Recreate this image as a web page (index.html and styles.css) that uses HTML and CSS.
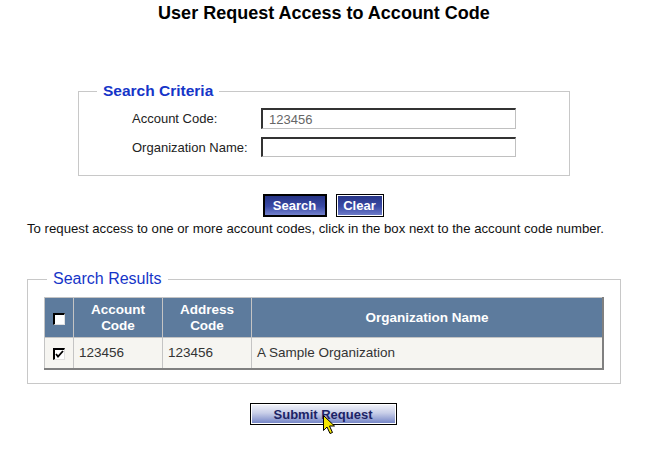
FILE: index.html
```html
<!DOCTYPE html>
<html lang="en">
<head>
  <meta charset="UTF-8">
  <title>User Request Access to Account Code</title>
  <link rel="stylesheet" href="styles.css">
</head>
<body>
  <div class="page">
    <h1 class="title">User Request Access to Account Code</h1>

    <fieldset class="criteria">
      <legend>Search Criteria</legend>
      <div class="form-grid">
        <label for="acct">Account Code:</label>
        <input type="text" id="acct" value="123456">
        <label for="org">Organization Name:</label>
        <input type="text" id="org">
      </div>
    </fieldset>

    <div class="actions">
      <button type="button" class="btn btn-search">Search</button>
      <button type="button" class="btn btn-clear">Clear</button>
    </div>

    <p class="hint">To request access to one or more account codes, click in the box next to the account code number.</p>

    <fieldset class="results">
      <legend>Search Results</legend>
      <div class="results-body">
        <table>
          <thead>
            <tr>
              <th class="col-check"><span class="check"></span></th>
              <th class="col-acct">Account<br>Code</th>
              <th class="col-addr">Address<br>Code</th>
              <th>Organization Name</th>
            </tr>
          </thead>
          <tbody>
            <tr>
              <td class="col-check">
                <span class="check">
                  <svg width="9" height="9" viewBox="0 0 9 9"><path d="M1 4 L3 6.5 L8 1" fill="none" stroke="#000" stroke-width="1.8"/></svg>
                </span>
              </td>
              <td>123456</td>
              <td>123456</td>
              <td>A Sample Organization</td>
            </tr>
          </tbody>
        </table>
      </div>
    </fieldset>

    <div class="submit-row">
      <button type="button" class="btn-submit">Submit Request</button>
      <svg class="cursor" width="15" height="22" viewBox="0 0 15 22">
        <path d="M1.5 1.5 L1.5 16.5 L5 13 L8 19.5 L10.5 18.5 L7.5 12 L12.5 12 Z" fill="#f5e600" stroke="#000" stroke-width="1"/>
      </svg>
    </div>
  </div>
</body>
</html>
```

FILE: styles.css
```css
* {
  box-sizing: border-box;
}
body {
  margin: 0;
  background: #fff;
  font-family: "Liberation Sans", Arial, sans-serif;
  font-size: 13px;
  color: #111;
}
.page {
  width: 648px;
  padding-top: 2px;
}
.title {
  margin: 0;
  text-align: center;
  font-size: 18px;
  font-weight: bold;
  line-height: 22px;
  color: #000;
}
fieldset {
  border: 1px solid #c8c8c8;
  margin: 0;
  padding: 0;
}
legend {
  color: #1535c8;
  font-size: 16px;
  line-height: 18px;
  padding: 0 6px;
}
.criteria {
  margin: 58px 0 0 78px;
  width: 492px;
  height: 94px;
}
.criteria legend {
  margin-left: 18px;
  font-size: 15.5px;
  font-weight: bold;
}
.form-grid {
  display: grid;
  grid-template-columns: 129px 255px;
  row-gap: 8px;
  align-items: center;
  padding: 8px 0 0 53px;
}
.form-grid label {
  font-size: 13px;
  color: #222;
}
.form-grid input {
  height: 21px;
  width: 255px;
  padding: 0 6px;
  border: 1px solid;
  border-color: #333 #c0c0c0 #c0c0c0 #333;
  border-width: 2px 1px 1px 2px;
  font-family: inherit;
  font-size: 13px;
  color: #666;
}
.form-grid input + label + input {
  height: 20px;
}
.actions {
  display: flex;
  justify-content: center;
  gap: 9px;
  margin-top: 18px;
  padding-right: 2px;
}
.btn {
  height: 23px;
  color: #fff;
  font-family: inherit;
  font-size: 13px;
  font-weight: bold;
  background: linear-gradient(#263485, #3a4aa6 55%, #7381cc);
  cursor: pointer;
  padding: 0 6px;
}
.btn-search {
  width: 64px;
  border: 2px solid #000;
}
.btn-clear {
  width: 48px;
  border: 1px solid #000;
  box-shadow: inset 0 0 0 1px #fff;
}
.hint {
  margin: 4px 0 0 27px;
  font-size: 13.2px;
  line-height: 15px;
  color: #111;
}
.results {
  margin: 34px 0 0 27px;
  width: 594px;
  height: 114px;
}
.results legend {
  margin-left: 19px;
}
.results-body {
  padding: 9px 0 0 16px;
}
table {
  width: 560px;
  border-collapse: collapse;
  border: 2px solid #808080;
  border-top-width: 1px;
  border-left-width: 1px;
}
th, td {
  border: 1px solid #c4c4c4;
}
th {
  background: #5d7b9d;
  color: #fff;
  font-size: 13.5px;
  font-weight: bold;
  line-height: 16px;
  height: 40px;
  padding: 0 4px;
  text-align: center;
}
td {
  background: #f6f5f1;
  color: #333;
  font-size: 13.5px;
  height: 31px;
  padding: 0 5px;
  vertical-align: middle;
}
.col-check {
  width: 29px;
  padding: 0;
  text-align: center;
}
td.col-check {
  padding: 0;
}
.col-acct,
.col-addr {
  width: 89px;
}
.check {
  display: inline-flex;
  align-items: center;
  justify-content: center;
  width: 12px;
  height: 12px;
  border: 1px solid;
  border-color: #000 #e0e0e0 #e0e0e0 #000;
  border-width: 2px 1px 1px 2px;
  background: #fff;
  vertical-align: middle;
  margin-top: 2px;
}
.submit-row {
  position: relative;
  display: flex;
  justify-content: center;
  margin-top: 19px;
  padding-right: 2px;
  height: 40px;
}
.btn-submit {
  width: 147px;
  height: 22px;
  border: 1px solid #000;
  box-shadow: inset 0 0 0 1px #fff;
  background: linear-gradient(#f4f5fb, #c8cee8 45%, #6f80c4);
  color: #1c2366;
  font-family: inherit;
  font-size: 13px;
  font-weight: bold;
  cursor: pointer;
}
.cursor {
  position: absolute;
  display: block;
  z-index: 2;
  left: 322px;
  top: 11px;
}
```
